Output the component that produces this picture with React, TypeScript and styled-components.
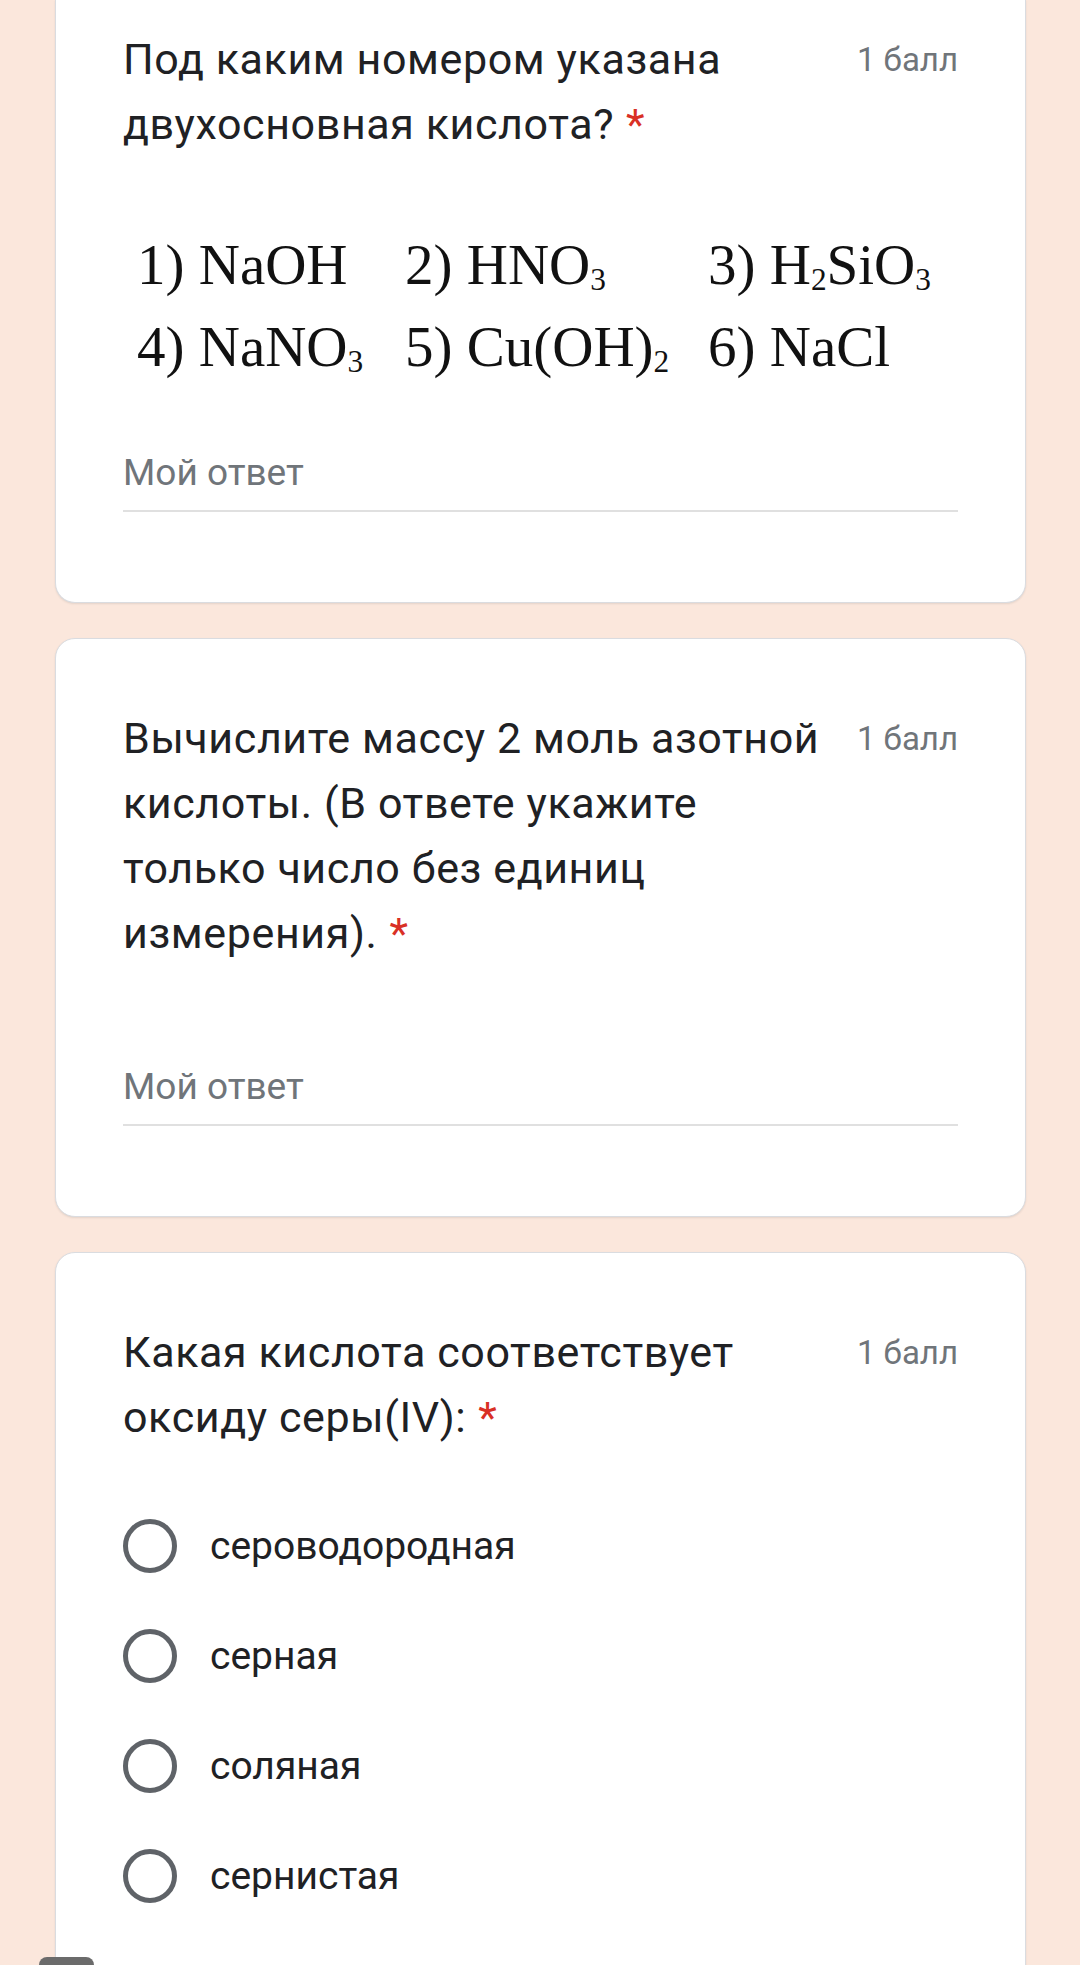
import * as React from "react"
import styled, { createGlobalStyle } from "styled-components"

const GlobalStyle = createGlobalStyle`
  html, body {
    margin: 0;
    padding: 0;
    background-color: #fbe7dc;
  }
`

const ScPage = styled.div`
  position: relative;
  height: 1965px;
  overflow: hidden;
  padding: 0 54px 0 55px;
  background-color: #fbe7dc;
  display: flex;
  flex-direction: column;
  gap: 35px;
  font-family: Roboto, "Liberation Sans", Arial, sans-serif;
`

const ScCard = styled.div<{ $cutTop?: boolean }>`
  flex-shrink: 0;
  background-color: #ffffff;
  border: 1px solid #dadce0;
  border-top: ${(p) => (p.$cutTop ? "none" : "1px solid #dadce0")};
  border-radius: ${(p) => (p.$cutTop ? "0 0 20px 20px" : "20px")};
  box-shadow: 0 1px 2px rgba(60, 64, 67, 0.12);
  padding: ${(p) => (p.$cutTop ? "27px" : "67px")} 67px 90px 67px;
`

const ScHeader = styled.div`
  display: flex;
  align-items: flex-start;
  justify-content: space-between;
  gap: 30px;
`

const ScTitle = styled.div`
  font-size: 43px;
  line-height: 65px;
  color: #202124;
  white-space: nowrap;
  letter-spacing: 0.6px;
`

const ScRequired = styled.span`
  color: #d93025;
  margin-left: 12px;
`

const ScPoints = styled.div`
  font-size: 33px;
  line-height: 65px;
  color: #70757a;
  white-space: nowrap;
`

const ScFormula = styled.div`
  margin-top: 67px;
  padding-left: 14px;
  display: grid;
  grid-template-columns: 268px 303px auto;
  font-family: "Liberation Serif", "Times New Roman", serif;
  font-size: 57px;
  line-height: 82px;
  color: #111111;
`

const ScSub = styled.sub`
  font-size: 0.55em;
  line-height: 0;
  vertical-align: -0.18em;
`

const ScAnswer = styled.div<{ $gap: number }>`
  margin-top: ${(p) => p.$gap}px;
  padding-bottom: 13px;
  border-bottom: 2px solid #e0e0e0;
  font-size: 37px;
  line-height: 48px;
  color: #70757a;
`

const ScOptions = styled.div`
  margin-top: 41px;
  display: flex;
  flex-direction: column;
`

const ScOption = styled.div`
  display: flex;
  align-items: center;
  height: 110px;
  gap: 33px;
`

const ScRadio = styled.div`
  box-sizing: border-box;
  width: 54px;
  height: 54px;
  border: 5px solid #5f6368;
  border-radius: 50%;
  flex-shrink: 0;
`

const ScOptionLabel = styled.div`
  font-size: 39px;
  line-height: 48px;
  color: #202124;
`

const ScFloatingTab = styled.div`
  position: absolute;
  left: 39px;
  bottom: -12px;
  width: 55px;
  height: 20px;
  border-radius: 8px 8px 0 0;
  background-color: #6b6b6b;
`

type Line = string

const Question: React.FC<{ lines: Line[] }> = ({ lines }) => (
  <ScHeader>
    <ScTitle>
      {lines.map((line, i) => (
        <React.Fragment key={i}>
          {line}
          {i === lines.length - 1 ? <ScRequired>*</ScRequired> : <br />}
        </React.Fragment>
      ))}
    </ScTitle>
    <ScPoints>1 балл</ScPoints>
  </ScHeader>
)

const options = ["сероводородная", "серная", "соляная", "сернистая"]

export default function App() {
  return (
    <>
      <GlobalStyle />
      <ScPage>
        <ScCard $cutTop>
          <Question lines={["Под каким номером указана", "двухосновная кислота?"]} />
          <ScFormula>
            <div>1) NaOH</div>
            <div>
              2) HNO<ScSub>3</ScSub>
            </div>
            <div>
              3) H<ScSub>2</ScSub>SiO<ScSub>3</ScSub>
            </div>
            <div>
              4) NaNO<ScSub>3</ScSub>
            </div>
            <div>
              5) Cu(OH)<ScSub>2</ScSub>
            </div>
            <div>6) NaCl</div>
          </ScFormula>
          <ScAnswer $gap={61}>Мой ответ</ScAnswer>
        </ScCard>

        <ScCard>
          <Question
            lines={[
              "Вычислите массу 2 моль азотной",
              "кислоты. (В ответе укажите",
              "только число без единиц",
              "измерения).",
            ]}
          />
          <ScAnswer $gap={97}>Мой ответ</ScAnswer>
        </ScCard>

        <ScCard>
          <Question lines={["Какая кислота соответствует", "оксиду серы(IV):"]} />
          <ScOptions>
            {options.map((o) => (
              <ScOption key={o}>
                <ScRadio />
                <ScOptionLabel>{o}</ScOptionLabel>
              </ScOption>
            ))}
          </ScOptions>
        </ScCard>
        <ScFloatingTab />
      </ScPage>
    </>
  )
}
